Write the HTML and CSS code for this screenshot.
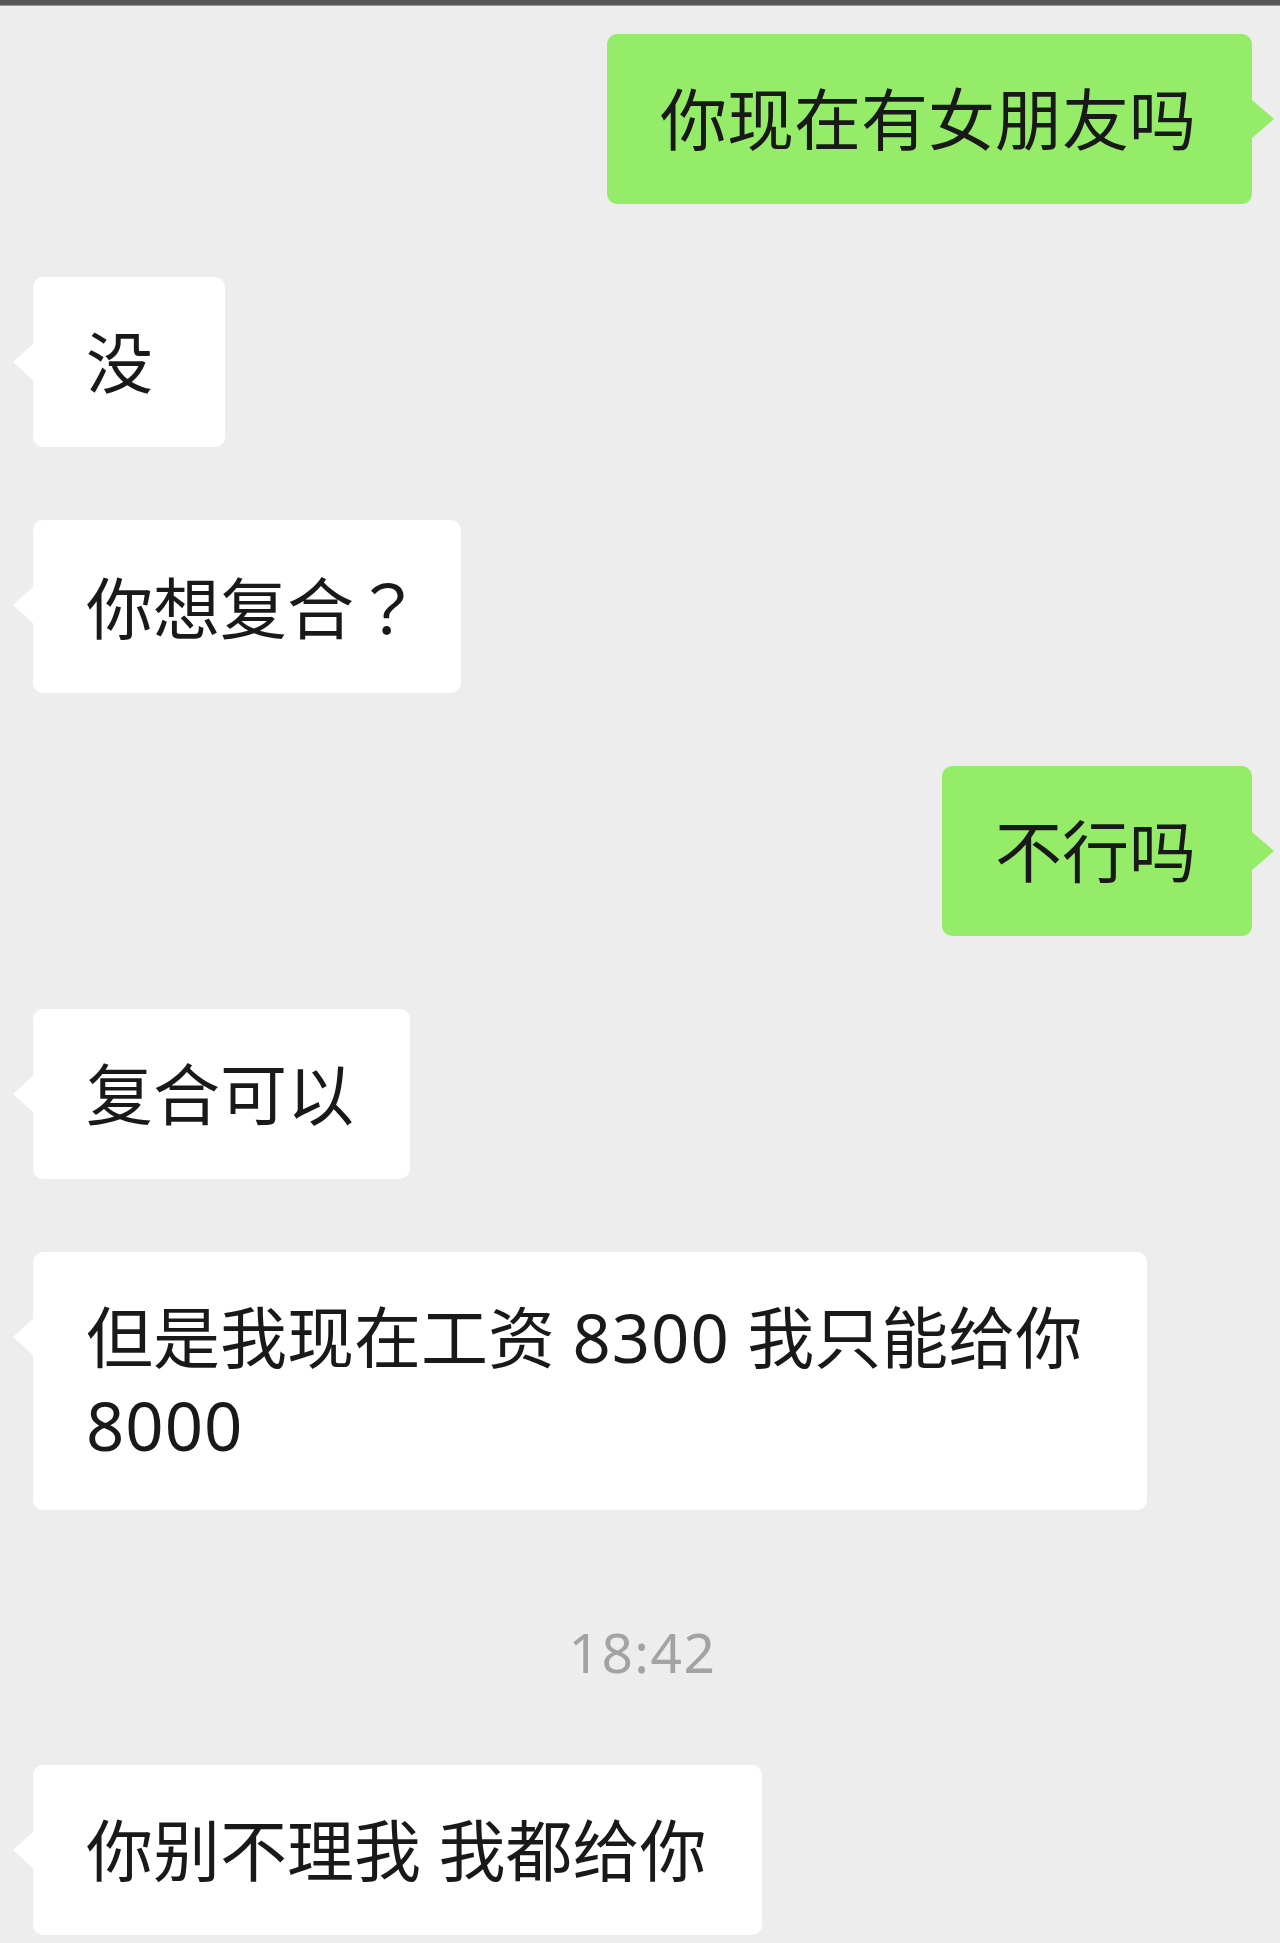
FILE: index.html
```html
<!DOCTYPE html>
<html>
<head>
  <meta charset="utf-8">
  <title>聊天记录</title>
  <link rel="stylesheet" href="styles.css">
</head>
<body>
<div class="status-bar"></div>
<div class="chat">
  <div class="msg msg-me"><div class="bubble">你现在有女朋友吗</div></div>
  <div class="msg msg-them"><div class="bubble">没</div></div>
  <div class="msg msg-them"><div class="bubble bubble-q">你想复合<span class="punct">？</span></div></div>
  <div class="msg msg-me"><div class="bubble">不行吗</div></div>
  <div class="msg msg-them"><div class="bubble">复合可以</div></div>
  <div class="msg msg-them"><div class="bubble">但是我现在工资 <span class="num">8300</span> 我只能给你 <span class="num">8000</span></div></div>
  <div class="time">18:42</div>
  <div class="msg msg-them"><div class="bubble">你别不理我 我都给你</div></div>
</div>
</body>
</html>
```

FILE: styles.css
```css
body {
  margin: 0;
  background: #ededed;
  font-family: 'Noto Sans', 'Noto Sans CJK SC', sans-serif;
  color: #191919;
}
.status-bar {
  height: 5px;
  background: #575757;
  border-bottom: 1px solid #9a9a9a;
}
.chat {
  display: flex;
  flex-direction: column;
  gap: 73px;
  padding: 28px 28px 10px 33px;
}
.msg {
  display: flex;
}
.msg-me {
  justify-content: flex-end;
}
.msg-them {
  justify-content: flex-start;
}
.bubble {
  position: relative;
  box-sizing: border-box;
  min-width: 192px;
  max-width: 1114px;
  padding: 41px 56px 41px 53px;
  font-size: 67px;
  line-height: 88px;
  border-radius: 10px;
  background: #fff;
}
.bubble-q {
  padding-right: 40px;
}
.punct {
  font-family: 'Noto Sans CJK TC', sans-serif;
}
.num {
  letter-spacing: 1px;
}
.msg-me .bubble {
  background: #95ec69;
}
.msg-them .bubble:before {
  content: "";
  position: absolute;
  left: -20px;
  top: 66px;
  border-style: solid;
  border-width: 19px 21px 19px 0;
  border-color: transparent #fff transparent transparent;
}
.msg-me .bubble:after {
  content: "";
  position: absolute;
  right: -22px;
  top: 66px;
  border-style: solid;
  border-width: 19px 0 19px 22px;
  border-color: transparent transparent transparent #95ec69;
}
.time {
  margin: 39px 0 10px;
  text-align: center;
  font-size: 55px;
  line-height: 60px;
  letter-spacing: 1.5px;
  color: #a3a3a3;
}
```
